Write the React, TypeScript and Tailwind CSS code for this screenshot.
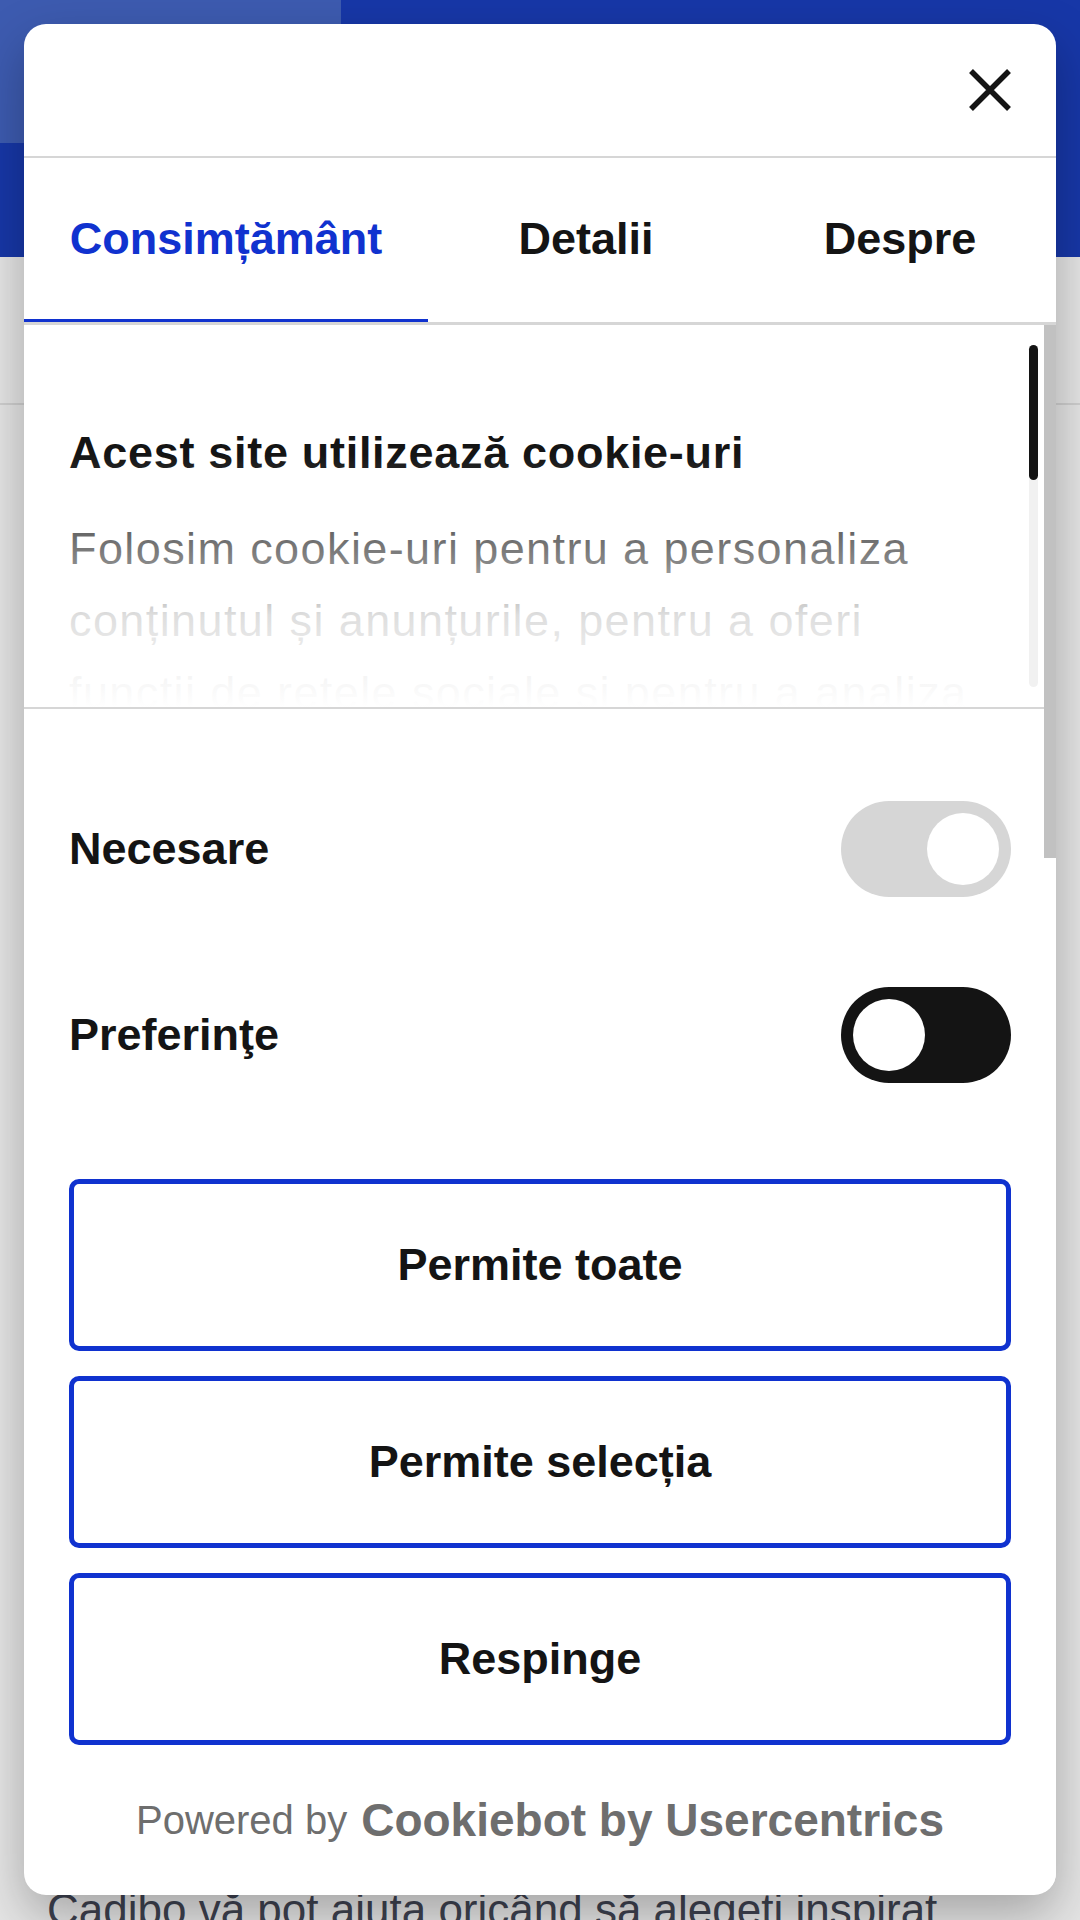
import React from "react";

function Toggle({ on, disabled }: { on: boolean; disabled?: boolean }) {
  return (
    <div
      className={
        "flex h-[96px] w-[170px] items-center rounded-full px-[12px] " +
        (disabled ? "justify-end bg-[#d6d6d6]" : on ? "justify-end bg-[#141414]" : "justify-start bg-[#141414]")
      }
    >
      <div className="h-[72px] w-[72px] rounded-full bg-white" />
    </div>
  );
}

function ActionButton({ label }: { label: string }) {
  return (
    <button
      type="button"
      className="flex h-[172px] w-full items-center justify-center rounded-[10px] border-[5px] border-[#1032cf] bg-white text-[45px] font-bold text-[#141414]"
    >
      {label}
    </button>
  );
}

export default function App() {
  return (
    <div className="relative h-[1920px] w-[1080px] overflow-hidden bg-[#e5e5e5] font-['Liberation_Sans',Arial,sans-serif]">
      {/* page behind the dialog */}
      <div className="h-[257px] bg-[#1737a7]">
        <div className="h-[143px] w-[341px] bg-[#3d5bb0]" />
      </div>
      <div className="h-[148px] border-b-2 border-[#cfcfcf]" />
      <p className="mt-[1475px] whitespace-nowrap pl-[47px] text-[44px] leading-[60px] text-[#3e4250]">
        Cadibo vă pot ajuta oricând să alegeți inspirat
      </p>

      {/* consent dialog */}
      <div className="absolute left-[24px] top-[24px] flex h-[1871px] w-[1032px] flex-col overflow-hidden rounded-[22px] bg-white shadow-[0_20px_50px_rgba(0,0,0,0.28)]">
        {/* header */}
        <div className="flex h-[134px] shrink-0 items-center justify-end border-b-2 border-[#d6d6d6] pr-[45px]">
          <svg width="42" height="42" viewBox="0 0 42 42" aria-label="Close">
            <path d="M2 2 L40 40 M40 2 L2 40" stroke="#141414" strokeWidth="5.5" fill="none" />
          </svg>
        </div>

        {/* tabs */}
        <div className="flex h-[167px] shrink-0 border-b-[3px] border-[#d6d6d6]">
          <div className="flex w-[404px] items-center justify-center border-b-[3px] border-[#1032cf] text-[45px] font-bold text-[#1032cf]">
            Consimțământ
          </div>
          <div className="flex w-[316px] items-center justify-center border-b-[3px] border-transparent text-[45px] font-bold text-[#141414]">
            Detalii
          </div>
          <div className="flex flex-1 items-center justify-center border-b-[3px] border-transparent text-[45px] font-bold text-[#141414]">
            Despre
          </div>
        </div>

        {/* body */}
        <div className="flex min-h-0 flex-1">
          <div className="flex min-w-0 flex-1 flex-col">
            {/* description */}
            <div className="flex h-[384px] shrink-0 border-b-2 border-[#d6d6d6]">
              <div className="relative min-w-0 flex-1 overflow-hidden pl-[45px] pr-[30px] pt-[91px]">
                <h2 className="text-[45px] font-bold leading-[74px] tracking-[0.7px] text-[#141414]">
                  Acest site utilizează cookie-uri
                </h2>
                <p className="mt-[23px] text-[45px] leading-[72px] tracking-[1.4px] text-[#141414]">
                  Folosim cookie-uri pentru a personaliza conținutul și anunțurile, pentru a oferi funcții de rețele
                  sociale și pentru a analiza
                </p>
                <div className="absolute inset-x-0 bottom-0 h-[252px] bg-[linear-gradient(to_bottom,rgba(255,255,255,0)_0px,rgba(255,255,255,0.5)_110px,rgba(255,255,255,0.86)_160px,rgba(255,255,255,0.95)_215px,#ffffff_252px)]" />
              </div>
              <div className="my-[20px] mr-[6px] flex w-[9px] flex-col rounded-full bg-[#f1f1f1]">
                <div className="h-[135px] rounded-full bg-[#141414]" />
              </div>
            </div>

            {/* toggles */}
            <div className="flex flex-col pt-[47px]">
              <div className="flex h-[186px] items-center justify-between pl-[45px] pr-[33px]">
                <span className="text-[45px] font-bold text-[#141414]">Necesare</span>
                <Toggle on disabled />
              </div>
              <div className="flex h-[186px] items-center justify-between pl-[45px] pr-[33px]">
                <span className="text-[45px] font-bold text-[#141414]">Preferinţe</span>
                <Toggle on={false} />
              </div>
            </div>

            {/* actions */}
            <div className="mt-[51px] flex flex-col gap-[25px] pl-[45px] pr-[33px]">
              <ActionButton label="Permite toate" />
              <ActionButton label="Permite selecția" />
              <ActionButton label="Respinge" />
            </div>

            {/* footer */}
            <div className="flex flex-1 items-center justify-center pl-[45px] pr-[33px] text-[#6e6e6e]">
              <span className="text-[40px]">Powered by</span>
              <span className="ml-[14px] text-[46px] font-bold">Cookiebot by Usercentrics</span>
            </div>
          </div>

          {/* outer scrollbar */}
          <div className="w-[12px] shrink-0 bg-white">
            <div className="h-[533px] bg-[#c1c1c1]" />
          </div>
        </div>
      </div>
    </div>
  );
}
